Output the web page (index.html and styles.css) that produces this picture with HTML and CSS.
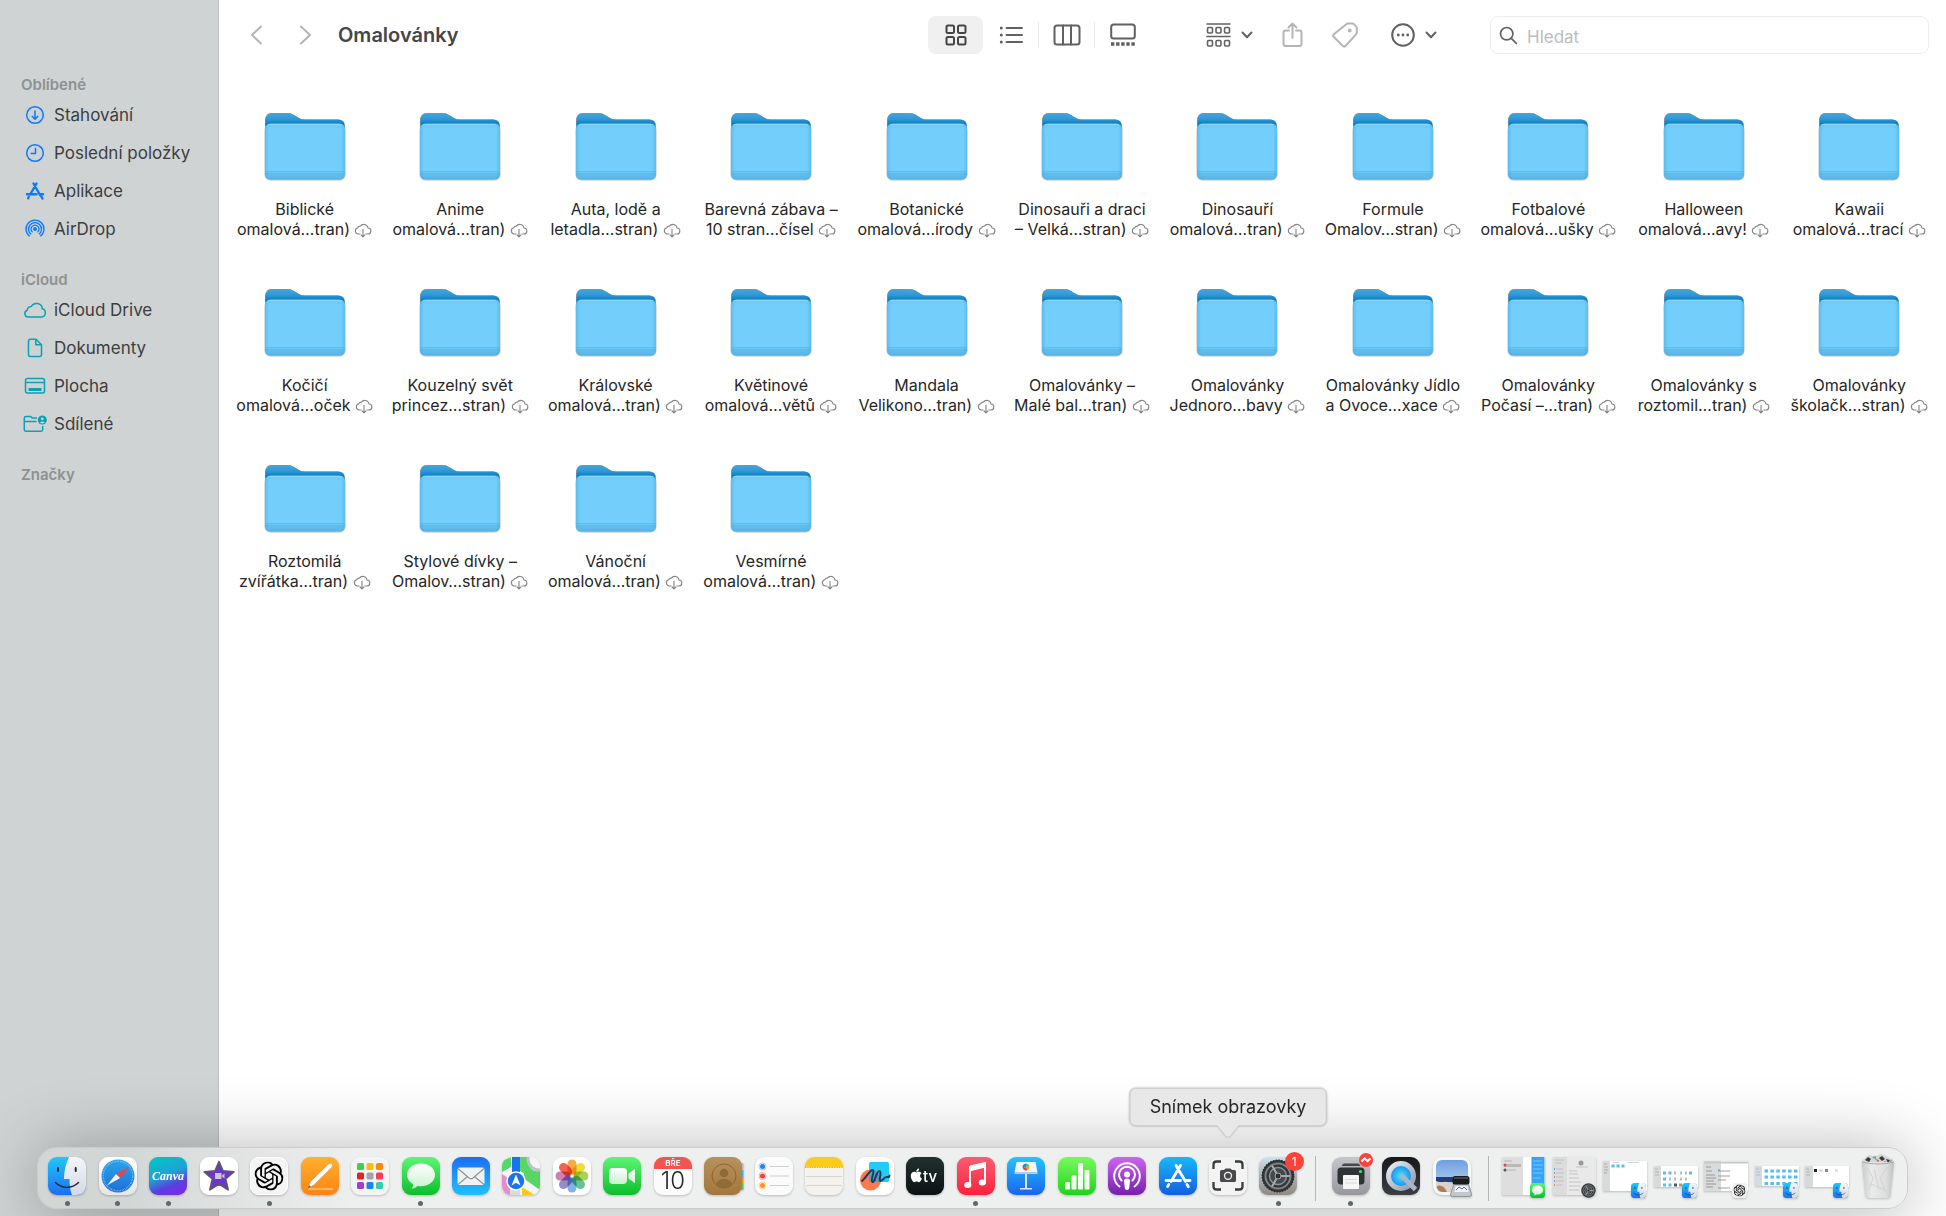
FILE: index.html
```html
<!DOCTYPE html>
<html lang="cs">
<head>
    <meta charset="UTF-8">
    <meta name="viewport" content="width=device-width, initial-scale=1.0">
    <title>Omalovánky</title>
    <link rel="stylesheet" href="styles.css">
</head>
<body>
    <!-- shared shapes and gradients -->
    <svg class="defs" aria-hidden="true">
        <defs>
            <linearGradient id="gBack" x1="0" y1="0" x2="0" y2="1"><stop offset="0" stop-color="#47a5dc"/><stop offset=".15" stop-color="#3399d4"/><stop offset=".28" stop-color="#0a7fc6"/></linearGradient>
            <linearGradient id="gFront" x1="0" y1="0" x2="0" y2="1"><stop offset="0" stop-color="#6bc7f5"/><stop offset=".1" stop-color="#73cefb"/><stop offset=".84" stop-color="#73cefb"/><stop offset=".89" stop-color="#66c3f2"/><stop offset="1" stop-color="#54b3e6"/></linearGradient>
            <linearGradient id="gSide"><stop offset="0" stop-color="#3ba2dc" stop-opacity=".4"/><stop offset=".05" stop-color="#3ba2dc" stop-opacity="0"/><stop offset=".95" stop-color="#3ba2dc" stop-opacity="0"/><stop offset="1" stop-color="#3ba2dc" stop-opacity=".4"/></linearGradient>
            <linearGradient id="gFinder" x1="0" y1="0" x2="0" y2="1"><stop offset="0" stop-color="#1fc8fb"/><stop offset="1" stop-color="#1d6ff2"/></linearGradient>
            <linearGradient id="gFace" x1="0" y1="0" x2="0" y2="1"><stop offset="0" stop-color="#f4f5f8"/><stop offset="1" stop-color="#d3dae8"/></linearGradient>
            <linearGradient id="gWhite" x1="0" y1="0" x2="0" y2="1"><stop offset="0" stop-color="#fff"/><stop offset="1" stop-color="#e6e6e6"/></linearGradient>
            <linearGradient id="gSafari" x1="0" y1="0" x2="0" y2="1"><stop offset="0" stop-color="#2aa5ee"/><stop offset="1" stop-color="#1c6fd8"/></linearGradient>
            <linearGradient id="gCanva" x1=".3" y1="0" x2=".7" y2="1"><stop offset="0" stop-color="#05c1c9"/><stop offset=".45" stop-color="#1ea3d3"/><stop offset=".75" stop-color="#5a3fe0"/><stop offset="1" stop-color="#7a2be8"/></linearGradient>
            <linearGradient id="gOrange" x1="0" y1="0" x2="0" y2="1"><stop offset="0" stop-color="#ffb02e"/><stop offset="1" stop-color="#ff8316"/></linearGradient>
            <linearGradient id="gGreen" x1="0" y1="0" x2="0" y2="1"><stop offset="0" stop-color="#5df675"/><stop offset="1" stop-color="#0cbd2b"/></linearGradient>
            <linearGradient id="gLime" x1="0" y1="0" x2="0" y2="1"><stop offset="0" stop-color="#7af95f"/><stop offset="1" stop-color="#1fd31c"/></linearGradient>
            <linearGradient id="gBubble" x1="0" y1="0" x2="0" y2="1"><stop offset="0" stop-color="#fff"/><stop offset="1" stop-color="#c8f2cf"/></linearGradient>
            <linearGradient id="gMail" x1="0" y1="0" x2="0" y2="1"><stop offset="0" stop-color="#1b6df3"/><stop offset="1" stop-color="#1fc0fd"/></linearGradient>
            <linearGradient id="gTan" x1="0" y1="0" x2="0" y2="1"><stop offset="0" stop-color="#b7925c"/><stop offset="1" stop-color="#a2773c"/></linearGradient>
            <linearGradient id="gTv" x1="0" y1="0" x2="0" y2="1"><stop offset="0" stop-color="#22312f"/><stop offset="1" stop-color="#0b1113"/></linearGradient>
            <linearGradient id="gMusic" x1="0" y1="0" x2="0" y2="1"><stop offset="0" stop-color="#fb5c74"/><stop offset="1" stop-color="#fa233b"/></linearGradient>
            <linearGradient id="gKey" x1="0" y1="0" x2="0" y2="1"><stop offset="0" stop-color="#26c4fd"/><stop offset="1" stop-color="#1a63f0"/></linearGradient>
            <linearGradient id="gPod" x1="0" y1="0" x2="0" y2="1"><stop offset="0" stop-color="#cd65ee"/><stop offset="1" stop-color="#7620ae"/></linearGradient>
            <linearGradient id="gStore" x1="0" y1="0" x2="0" y2="1"><stop offset="0" stop-color="#19b8f8"/><stop offset="1" stop-color="#125fe0"/></linearGradient>
            <linearGradient id="gPrefs" x1="0" y1="0" x2="0" y2="1"><stop offset="0" stop-color="#cbe3ee"/><stop offset=".5" stop-color="#adb2b3"/><stop offset="1" stop-color="#8e8a84"/></linearGradient>
            <linearGradient id="gPrint" x1="0" y1="0" x2="0" y2="1"><stop offset="0" stop-color="#c6c5ca"/><stop offset="1" stop-color="#98979d"/></linearGradient>
            <linearGradient id="gDark" x1="0" y1="0" x2="0" y2="1"><stop offset="0" stop-color="#16181b"/><stop offset="1" stop-color="#3a3d42"/></linearGradient>
            <linearGradient id="gSilver" x1="0" y1="0" x2="1" y2="1"><stop offset="0" stop-color="#e9eef5"/><stop offset="1" stop-color="#8f98a8"/></linearGradient>
            <linearGradient id="gSky" x1="0" y1="0" x2="0" y2="1"><stop offset="0" stop-color="#6f9fdf"/><stop offset="1" stop-color="#c6dbf4"/></linearGradient>
            <linearGradient id="gBin"><stop offset="0" stop-color="#c9cacb"/><stop offset=".3" stop-color="#eceded"/><stop offset=".75" stop-color="#dfdfe0"/><stop offset="1" stop-color="#bdbebf"/></linearGradient>
            <radialGradient id="gQt"><stop offset="0" stop-color="#4be3ff"/><stop offset="1" stop-color="#1580e6"/></radialGradient>
            <clipPath id="tile"><rect width="38" height="38" rx="9"/></clipPath>
        </defs>

        <symbol id="folder" viewBox="0 0 84 70">
            <path d="M2 10Q2 2 9 2H25Q28 2 31 4L36 7Q38 8.500 42 8.500H75Q82 8.500 82 15V40H2z" fill="#8e9aa3"/>
            <path d="M2.500 10Q2.500 2 9 2H25Q28 2 31 4L36 7Q38 8.500 42 8.500H75Q81.500 8.500 81.500 15V40H2.500z" fill="url(#gBack)"/>
            <rect x="1.500" y="13" width="81" height="56.500" rx="6" fill="#6e8ba0" opacity=".55"/>
            <rect x="2" y="12.500" width="80" height="56" rx="5.500" fill="url(#gFront)"/>
            <rect x="2" y="12.500" width="80" height="56" rx="5.500" fill="url(#gSide)"/>
            <path d="M5 13.500h74" stroke="#91dafc" opacity=".8"/>
            <path d="M3 60.500h78M3 63h78" stroke="#4eade0" stroke-width=".7" opacity=".6"/>
        </symbol>
        <symbol id="cloud" viewBox="0 0 18 16">
            <path d="M6.500 11H4.300a3.200 3.200 0 0 1-.5-6.300A2.500 2.500 0 0 1 6.300 3.100 4.300 4.300 0 0 1 14 5a3 3 0 0 1-.3 6h-2.200M9 6v7.500M6.800 11.700 9 13.900l2.200-2.200" fill="none" stroke="#858585" stroke-width="1.100"/>
        </symbol>
        <symbol id="finder" viewBox="0 0 38 38">
            <g clip-path="url(#tile)">
                <rect width="38" height="38" fill="url(#gFinder)"/>
                <path d="M21 0C17.500 7 16 15 16 22h5.500c0 6 .5 11 2.500 16h14V0z" fill="url(#gFace)"/>
                <path d="M10 11v3M27.700 11v3" stroke="#1d2b3a" stroke-width="2" stroke-linecap="round"/>
                <path d="M7.500 25.500c6.500 6.500 16.500 6.500 23 0" fill="none" stroke="#1d2b3a" stroke-width="1.500" stroke-linecap="round"/>
            </g>
        </symbol>
        <symbol id="knot" viewBox="0 0 24 24">
            <path d="M22.2819 9.8211a5.9847 5.9847 0 0 0-.5157-4.9108 6.0462 6.0462 0 0 0-6.5098-2.9A6.0651 6.0651 0 0 0 4.9807 4.1818a5.9847 5.9847 0 0 0-3.9977 2.9 6.0462 6.0462 0 0 0 .7427 7.0966 5.98 5.98 0 0 0 .511 4.9107 6.051 6.051 0 0 0 6.5146 2.9001A5.9847 5.9847 0 0 0 13.2599 24a6.0557 6.0557 0 0 0 5.7718-4.2058 5.9894 5.9894 0 0 0 3.9977-2.9001 6.0557 6.0557 0 0 0-.7475-7.0729zm-9.022 12.6081a4.4755 4.4755 0 0 1-2.8764-1.0408l.1419-.0804 4.7783-2.7582a.7948.7948 0 0 0 .3927-.6813v-6.7369l2.02 1.1686a.071.071 0 0 1 .038.052v5.5826a4.504 4.504 0 0 1-4.4945 4.4944zm-9.6607-4.1254a4.4708 4.4708 0 0 1-.5346-3.0137l.142.0852 4.783 2.7582a.7712.7712 0 0 0 .7806 0l5.8428-3.3685v2.3324a.0804.0804 0 0 1-.0332.0615L9.74 19.9502a4.4992 4.4992 0 0 1-6.1408-1.6464zM2.3408 7.8956a4.485 4.485 0 0 1 2.3655-1.9728V11.6a.7664.7664 0 0 0 .3879.6765l5.8144 3.3543-2.0201 1.1685a.0757.0757 0 0 1-.071 0l-4.8303-2.7865A4.504 4.504 0 0 1 2.3408 7.872zm16.5963 3.8558L13.1038 8.364 15.1192 7.2a.0757.0757 0 0 1 .071 0l4.8303 2.7913a4.4944 4.4944 0 0 1-.6765 8.1042v-5.6772a.79.79 0 0 0-.407-.667zm2.0107-3.0231l-.142-.0852-4.7735-2.7818a.7759.7759 0 0 0-.7854 0L9.409 9.2297V6.8974a.0662.0662 0 0 1 .0284-.0615l4.8303-2.7866a4.4992 4.4992 0 0 1 6.6802 4.66zM8.3065 12.863l-2.02-1.1638a.0804.0804 0 0 1-.038-.0567V6.0742a4.4992 4.4992 0 0 1 7.3757-3.4537l-.142.0805L8.704 5.459a.7948.7948 0 0 0-.3927.6813zm1.0976-2.3654l2.602-1.4998 2.6069 1.4998v2.9994l-2.5974 1.4997-2.6067-1.4997Z"/>
        </symbol>
        <symbol id="messages" viewBox="0 0 38 38">
            <rect width="38" height="38" rx="9" fill="url(#gGreen)"/>
            <path d="M19 6.500c-8 0-14 5-14 11.300 0 4 2.300 7.300 6 9.400.3 1.600-.3 3-1.500 4.300 2.300 0 4.300-.9 6-2.600 1.100.2 2.300.3 3.500.3 8 0 14-5 14-11.400S27 6.500 19 6.500z" fill="url(#gBubble)"/>
        </symbol>
        <symbol id="gear" viewBox="0 0 34 34">
            <circle cx="17" cy="17" r="16" fill="#34373a"/>
            <circle cx="17" cy="17" r="15.500" fill="none" stroke="#2b2d30" stroke-width="2" stroke-dasharray="1.500 1.200"/>
            <circle cx="17" cy="17" r="12.500" fill="none" stroke="#7e8386" stroke-width="2"/>
            <circle cx="17" cy="17" r="8.500" fill="#46494c" stroke="#8b9093" stroke-width="1.500"/>
            <path d="M17 17h12M17 17 11 6.600M17 17 11 27.400" stroke="#a5aaac" stroke-width="2"/>
            <circle cx="17" cy="17" r="3" fill="#2b2d30" stroke="#a5aaac"/>
        </symbol>
        <symbol id="chevron" viewBox="0 0 12 8"><path d="M1.500 1.500 6 6.200l4.500-4.700" fill="none" stroke="#616161" stroke-width="2" stroke-linecap="round" stroke-linejoin="round"/></symbol>
    </svg>

    <div class="window">
        <nav class="sidebar">
            <h2>Oblíbené</h2>
            <ul class="blue">
                <li><a href="#"><svg viewBox="0 0 24 20"><circle cx="12" cy="10" r="8.300"/><path d="M12 5.500v8.500M8.800 11l3.200 3.200 3.200-3.200"/></svg>Stahování</a></li>
                <li><a href="#"><svg viewBox="0 0 24 20"><circle cx="12" cy="10" r="8.300"/><path d="M12.500 4.800V10.500H7.500"/></svg>Poslední položky</a></li>
                <li><a href="#"><svg viewBox="0 0 24 20"><path d="M10.500 2.500l6.800 12M18.500 15.800l.9 1.700M13.500 2.500 7.200 13.500M5.800 16l-.7 1.300M4 13.300h9.500M17.300 13.300h2.700" stroke-width="2.400" stroke-linecap="round"/></svg>Aplikace</a></li>
                <li><a href="#"><svg viewBox="0 0 24 20"><circle cx="12" cy="10" r="1.200" fill="#0a7aff"/><path d="M9.600 13.300a4 4 0 1 1 4.800 0M8.100 15.300a6.500 6.500 0 1 1 7.800 0M6.700 17.300a9 9 0 1 1 10.600 0" stroke-width="1.300"/></svg>AirDrop</a></li>
            </ul>
            <h2>iCloud</h2>
            <ul class="teal">
                <li><a href="#"><svg viewBox="0 0 24 20"><path d="M5.300 17H18.500a4.200 4.200 0 0 0 .9-8.200 6 6 0 0 0-11.200-2.300 3.800 3.800 0 0 0-4 3.700A3.500 3.500 0 0 0 5.300 17z"/></svg>iCloud Drive</a></li>
                <li><a href="#"><svg viewBox="0 0 24 20"><path d="M7.500 1.200H13l5.500 5.500v9.800a2 2 0 0 1-2 2h-9a2 2 0 0 1-2-2V3.200a2 2 0 0 1 2-2zM12.800 1.200v5.600h5.600"/></svg>Dokumenty</a></li>
                <li><a href="#"><svg viewBox="0 0 24 20"><rect x="2.500" y="2.500" width="19" height="14.500" rx="2"/><path d="M2.500 6.500h19"/><path d="M5.500 13.500h13" stroke-width="3"/></svg>Plocha</a></li>
                <li><a href="#"><svg viewBox="0 0 24 20"><path d="M14 4H9.200L7.800 2.500H3A1.700 1.700 0 0 0 1.300 4v11.500A1.700 1.700 0 0 0 3 17.200h15a1.700 1.700 0 0 0 1.700-1.700V12M1.500 7.500h12"/><circle cx="19.300" cy="6" r="4.500" fill="#0ca0b5" stroke="none"/><circle cx="19.300" cy="4.800" r="1.400" fill="#cfd3d4" stroke="none"/><path d="M16.800 8.600q2.500-2.200 5 0-2.500 2-5 0z" fill="#cfd3d4" stroke="none"/></svg>Sdílené</a></li>
            </ul>
            <h2>Značky</h2>
        </nav>

        <main class="content">
            <header class="toolbar">
                <button class="tool" aria-label="Zpět"><svg width="13" height="20" viewBox="0 0 13 20"><path d="M11 1.500 2 10l9 8.500" stroke="#b5b5b5"/></svg></button>
                <button class="tool forward" aria-label="Vpřed"><svg width="13" height="20" viewBox="0 0 13 20"><path d="M2 1.500 11 10l-9 8.500" stroke="#b5b5b5"/></svg></button>
                <h1>Omalovánky</h1>
                <div class="views">
                    <button class="view active" aria-label="Ikony"><svg width="22" height="22" viewBox="0 0 22 22"><rect x="1.500" y="1.500" width="7.500" height="7.500" rx="1.500"/><rect x="13" y="1.500" width="7.500" height="7.500" rx="1.500"/><rect x="1.500" y="13" width="7.500" height="7.500" rx="1.500"/><rect x="13" y="13" width="7.500" height="7.500" rx="1.500"/></svg></button>
                    <button class="view" aria-label="Seznam"><svg width="24" height="20" viewBox="0 0 24 20"><path d="M7.500 3H23M7.500 10H23M7.500 17H23"/><path d="M2.300 3h.01M2.300 10h.01M2.300 17h.01" stroke-width="3"/></svg></button>
                    <span class="line"></span>
                    <button class="view" aria-label="Sloupce"><svg width="28" height="22" viewBox="0 0 28 22"><rect x="1.500" y="1.500" width="25" height="19" rx="2.500"/><path d="M10 1.500v19M18 1.500v19"/></svg></button>
                    <span class="line"></span>
                    <button class="view" aria-label="Galerie"><svg width="26" height="24" viewBox="0 0 26 24"><rect x="1.200" y="1.500" width="23.600" height="14" rx="2.500"/><path d="M1 21h24" stroke-width="3.500" stroke-dasharray="3.400 1.700" stroke-linecap="butt"/></svg></button>
                </div>
                <button class="tool group" aria-label="Seskupit"><svg class="thin" width="25" height="26" viewBox="0 0 25 26"><path d="M1 2h23M1 14.500h23"/><rect x="1.500" y="5.500" width="5" height="5.500" rx="1.200"/><rect x="10" y="5.500" width="5" height="5.500" rx="1.200"/><rect x="18.500" y="5.500" width="5" height="5.500" rx="1.200"/><rect x="1.500" y="18.500" width="5" height="5.500" rx="1.200"/><rect x="10" y="18.500" width="5" height="5.500" rx="1.200"/><rect x="18.500" y="18.500" width="5" height="5.500" rx="1.200"/></svg><svg width="12" height="8"><use href="#chevron"/></svg></button>
                <button class="tool dim" aria-label="Sdílet"><svg width="21" height="26" viewBox="0 0 21 26"><path d="M7 8.500H3.500a2 2 0 0 0-2 2V22a2 2 0 0 0 2 2h14a2 2 0 0 0 2-2V10.500a2 2 0 0 0-2-2H14M10.500 16V1.500M6.500 5.500l4-4 4 4"/></svg></button>
                <button class="tool dim" aria-label="Štítky"><svg width="26" height="26" viewBox="0 0 26 26"><path d="M14 2.500q1-1 2.300-1h4.200q1 0 1.700.8l1.800 2q.8.800.8 1.900v4.200q0 1.200-.8 2L13.500 24q-1.300 1.200-2.600 0L1.800 15q-1.200-1.400 0-2.700z"/><circle cx="17.700" cy="8.500" r="1" fill="#b5b5b5"/></svg></button>
                <button class="tool more" aria-label="Další akce"><svg width="24" height="24" viewBox="0 0 24 24"><circle cx="12" cy="12" r="10.800"/><path d="M7.300 12h.01M12 12h.01M16.700 12h.01" stroke-width="2.800"/></svg><svg width="12" height="8"><use href="#chevron"/></svg></button>
                <label class="search">
                    <svg width="19" height="19" viewBox="0 0 19 19"><circle cx="7.700" cy="7.700" r="6.200"/><path d="m12.300 12.300 5 5"/></svg>
                    <input type="search" placeholder="Hledat" aria-label="Hledat">
                </label>
            </header>

            <div class="files">
                <a class="file" href="#"><svg class="pic"><use href="#folder"/></svg><span>Biblické<br>omalová…tran) <svg class="dl"><use href="#cloud"/></svg></span></a>
                <a class="file" href="#"><svg class="pic"><use href="#folder"/></svg><span>Anime<br>omalová…tran) <svg class="dl"><use href="#cloud"/></svg></span></a>
                <a class="file" href="#"><svg class="pic"><use href="#folder"/></svg><span>Auta, lodě a<br>letadla…stran) <svg class="dl"><use href="#cloud"/></svg></span></a>
                <a class="file" href="#"><svg class="pic"><use href="#folder"/></svg><span>Barevná zábava –<br>10 stran…čísel <svg class="dl"><use href="#cloud"/></svg></span></a>
                <a class="file" href="#"><svg class="pic"><use href="#folder"/></svg><span>Botanické<br>omalová…írody <svg class="dl"><use href="#cloud"/></svg></span></a>
                <a class="file" href="#"><svg class="pic"><use href="#folder"/></svg><span>Dinosauři a draci<br>– Velká…stran) <svg class="dl"><use href="#cloud"/></svg></span></a>
                <a class="file" href="#"><svg class="pic"><use href="#folder"/></svg><span>Dinosauří<br>omalová…tran) <svg class="dl"><use href="#cloud"/></svg></span></a>
                <a class="file" href="#"><svg class="pic"><use href="#folder"/></svg><span>Formule<br>Omalov…stran) <svg class="dl"><use href="#cloud"/></svg></span></a>
                <a class="file" href="#"><svg class="pic"><use href="#folder"/></svg><span>Fotbalové<br>omalová…ušky <svg class="dl"><use href="#cloud"/></svg></span></a>
                <a class="file" href="#"><svg class="pic"><use href="#folder"/></svg><span>Halloween<br>omalová…avy! <svg class="dl"><use href="#cloud"/></svg></span></a>
                <a class="file" href="#"><svg class="pic"><use href="#folder"/></svg><span>Kawaii<br>omalová…trací <svg class="dl"><use href="#cloud"/></svg></span></a>

                <a class="file" href="#"><svg class="pic"><use href="#folder"/></svg><span>Kočičí<br>omalová…oček <svg class="dl"><use href="#cloud"/></svg></span></a>
                <a class="file" href="#"><svg class="pic"><use href="#folder"/></svg><span>Kouzelný svět<br>princez…stran) <svg class="dl"><use href="#cloud"/></svg></span></a>
                <a class="file" href="#"><svg class="pic"><use href="#folder"/></svg><span>Královské<br>omalová…tran) <svg class="dl"><use href="#cloud"/></svg></span></a>
                <a class="file" href="#"><svg class="pic"><use href="#folder"/></svg><span>Květinové<br>omalová…větů <svg class="dl"><use href="#cloud"/></svg></span></a>
                <a class="file" href="#"><svg class="pic"><use href="#folder"/></svg><span>Mandala<br>Velikono…tran) <svg class="dl"><use href="#cloud"/></svg></span></a>
                <a class="file" href="#"><svg class="pic"><use href="#folder"/></svg><span>Omalovánky –<br>Malé bal…tran) <svg class="dl"><use href="#cloud"/></svg></span></a>
                <a class="file" href="#"><svg class="pic"><use href="#folder"/></svg><span>Omalovánky<br>Jednoro…bavy <svg class="dl"><use href="#cloud"/></svg></span></a>
                <a class="file" href="#"><svg class="pic"><use href="#folder"/></svg><span>Omalovánky Jídlo<br>a Ovoce…xace <svg class="dl"><use href="#cloud"/></svg></span></a>
                <a class="file" href="#"><svg class="pic"><use href="#folder"/></svg><span>Omalovánky<br>Počasí –…tran) <svg class="dl"><use href="#cloud"/></svg></span></a>
                <a class="file" href="#"><svg class="pic"><use href="#folder"/></svg><span>Omalovánky s<br>roztomil…tran) <svg class="dl"><use href="#cloud"/></svg></span></a>
                <a class="file" href="#"><svg class="pic"><use href="#folder"/></svg><span>Omalovánky<br>školačk…stran) <svg class="dl"><use href="#cloud"/></svg></span></a>

                <a class="file" href="#"><svg class="pic"><use href="#folder"/></svg><span>Roztomilá<br>zvířátka…tran) <svg class="dl"><use href="#cloud"/></svg></span></a>
                <a class="file" href="#"><svg class="pic"><use href="#folder"/></svg><span>Stylové dívky –<br>Omalov…stran) <svg class="dl"><use href="#cloud"/></svg></span></a>
                <a class="file" href="#"><svg class="pic"><use href="#folder"/></svg><span>Vánoční<br>omalová…tran) <svg class="dl"><use href="#cloud"/></svg></span></a>
                <a class="file" href="#"><svg class="pic"><use href="#folder"/></svg><span>Vesmírné<br>omalová…tran) <svg class="dl"><use href="#cloud"/></svg></span></a>
            </div>
        </main>
    </div>

    <div class="dock">
        <button class="app running" aria-label="Finder"><svg viewBox="0 0 38 38"><use href="#finder"/></svg></button>
        <button class="app running" aria-label="Safari"><svg viewBox="0 0 38 38"><rect width="38" height="38" rx="9" fill="url(#gWhite)"/><circle cx="19" cy="19" r="16.500" fill="url(#gSafari)"/><circle cx="19" cy="19" r="14.800" fill="none" stroke="#a9d5f7" stroke-width="1.500" stroke-dasharray=".5 1.050"/><path d="M31 9 17 17l4 4z" fill="#f0433c"/><path d="M8 28.500 17 17l4 4z" fill="#f5f7f9"/></svg></button>
        <button class="app running" aria-label="Canva"><svg viewBox="0 0 38 38"><rect width="38" height="38" rx="9" fill="url(#gCanva)"/><text class="canva" x="19" y="23" text-anchor="middle">Canva</text></svg></button>
        <button class="app" aria-label="iMovie"><svg viewBox="0 0 38 38"><rect width="38" height="38" rx="9" fill="#fff"/><path d="M19 4.500l4 9.300 10.800 1-8.200 7 2.500 11L19 27l-9.100 5.800 2.500-11-8.200-7 10.800-1z" fill="#6d35cf" stroke="#5d5868" stroke-width="1.700" stroke-linejoin="round"/><path d="M15 16h6.500v6H15zM22 18.500l2.500-2v5l-2.500-2z" fill="#c9c6d6"/></svg></button>
        <button class="app running" aria-label="ChatGPT"><svg viewBox="0 0 38 38"><rect width="38" height="38" rx="9" fill="#f4f4f4"/><rect x=".5" y=".5" width="37" height="37" rx="8.500" fill="none" stroke="#fff"/><use href="#knot" x="4.500" y="4.500" width="29" height="29"/></svg></button>
        <button class="app" aria-label="Pages"><svg viewBox="0 0 38 38"><rect width="38" height="38" rx="9" fill="url(#gOrange)"/><path d="M7 32h25" stroke="#ffd9a6"/><path d="M6.500 31.500l3-7L27 7.500q2.500-2 4-.8t-.5 4L13 28z" fill="#fff" stroke="#d98a35" stroke-width=".6"/><path d="M6.500 31.500l1.700-3.300 1.600 1.500z" fill="#6a5a4a"/></svg></button>
        <button class="app" aria-label="Launchpad"><svg viewBox="0 0 38 38"><rect width="38" height="38" rx="9" fill="#f3f4f5"/><rect x="6" y="6" width="7" height="7" rx="1.500" fill="#3bd348"/><rect x="15.500" y="6" width="7" height="7" rx="1.500" fill="#fdbd0c"/><rect x="25" y="6" width="7" height="7" rx="1.500" fill="#fa8a12"/><rect x="6" y="15.500" width="7" height="7" rx="1.500" fill="#e32222"/><rect x="15.500" y="15.500" width="7" height="7" rx="1.500" fill="#a2a4a8"/><rect x="25" y="15.500" width="7" height="7" rx="1.500" fill="#fb3b5e"/><rect x="6" y="25" width="7" height="7" rx="1.500" fill="#a03fd0"/><rect x="15.500" y="25" width="7" height="7" rx="1.500" fill="#1b84fb"/><rect x="25" y="25" width="7" height="7" rx="1.500" fill="#35cfaa"/></svg></button>
        <button class="app running" aria-label="Zprávy"><svg viewBox="0 0 38 38"><use href="#messages"/></svg></button>
        <button class="app" aria-label="Mail"><svg viewBox="0 0 38 38"><rect width="38" height="38" rx="9" fill="url(#gMail)"/><rect x="5.500" y="10.500" width="27" height="17.500" rx="2" fill="#f0f1f1"/><path d="M6 11.500 17 21q2 1.500 4 0l11-9.500M6 27.500l9.500-8M32 27.500l-9.500-8" fill="none" stroke="#8c9196" stroke-width="1.100"/></svg></button>
        <button class="app" aria-label="Mapy"><svg viewBox="0 0 38 38"><g clip-path="url(#tile)"><rect width="38" height="38" fill="#f5f5f5"/><path d="M0 4 9 0v10L0 15z" fill="#56d766"/><path d="M0 17 9 23v15H0z" fill="#e58cce"/><path d="M18 0h7c0 9 5 15 13 15v10L18 14z" fill="#56d766"/><path d="M38 14v24L22 24v-9z" fill="#58d566"/><path d="M18 19 38 33v5H18z" fill="#f5f5f5"/><path d="M20 30 33 38H20z" fill="#fcca1a"/><circle cx="37" cy="2" r="11" fill="none" stroke="#bcc1c5" stroke-width="3"/><path d="M8 24h10v14H8z" fill="#d9dbe0"/><rect x="10" width="8" height="20" fill="#1873f2"/></g><circle cx="14" cy="24" r="9" fill="#1873f2" stroke="#fff" stroke-width="1.500"/><path d="M14 17.500l4.500 11-4.500-2.800-4.500 2.800z" fill="#fff"/></svg></button>
        <button class="app" aria-label="Fotky"><svg viewBox="0 0 38 38"><rect width="38" height="38" rx="9" fill="#fff"/><g class="petals"><rect x="14.500" y="2.500" width="9" height="15" rx="4.500" fill="#f9a12c"/><rect x="14.500" y="2.500" width="9" height="15" rx="4.500" fill="#e8dc1e" transform="rotate(45 19 19)"/><rect x="14.500" y="2.500" width="9" height="15" rx="4.500" fill="#a2cb46" transform="rotate(90 19 19)"/><rect x="14.500" y="2.500" width="9" height="15" rx="4.500" fill="#58bb88" transform="rotate(135 19 19)"/><rect x="14.500" y="2.500" width="9" height="15" rx="4.500" fill="#70acdf" transform="rotate(180 19 19)"/><rect x="14.500" y="2.500" width="9" height="15" rx="4.500" fill="#8c80c6" transform="rotate(225 19 19)"/><rect x="14.500" y="2.500" width="9" height="15" rx="4.500" fill="#c574ac" transform="rotate(270 19 19)"/><rect x="14.500" y="2.500" width="9" height="15" rx="4.500" fill="#f2513f" transform="rotate(315 19 19)"/></g></svg></button>
        <button class="app" aria-label="FaceTime"><svg viewBox="0 0 38 38"><rect width="38" height="38" rx="9" fill="url(#gGreen)"/><rect x="6" y="11" width="18" height="16" rx="4" fill="url(#gBubble)"/><path d="M25.500 16.500 32 11.700v14.600l-6.500-4.800z" fill="url(#gBubble)"/></svg></button>
        <button class="app" aria-label="Kalendář"><svg viewBox="0 0 38 38"><rect width="38" height="38" rx="9" fill="#fbfbfb"/><path d="M0 12V9a9 9 0 0 1 9-9h20a9 9 0 0 1 9 9v3z" fill="#f45450"/><text class="month" x="19" y="9" text-anchor="middle">BŘE</text><text class="day" x="19" y="32" text-anchor="middle">10</text></svg></button>
        <button class="app" aria-label="Kontakty"><svg viewBox="0 0 38 38"><path d="M36 6h2.500q1 0 1 1v5.500H36z" fill="#b9babc"/><path d="M36 13h3.500v7H36z" fill="#43b0ea"/><path d="M36 20h3.500v7H36z" fill="#f88f1c"/><path d="M36 27h3.500v5q0 1-1 1H36z" fill="#52c964"/><rect width="38" height="38" rx="9" fill="url(#gTan)"/><g fill="none" stroke="#866331" stroke-width=".9"><circle cx="20" cy="19" r="12"/></g><circle cx="20" cy="16" r="4.300" fill="#8f6b38"/><path d="M11.500 27q3-5 8.500-5t8.500 5q-8 8-17 0z" fill="#8f6b38"/></svg></button>
        <button class="app" aria-label="Připomínky"><svg viewBox="0 0 38 38"><rect width="38" height="38" rx="9" fill="#fbfbfb"/><path d="M14.500 9.500H34M14.500 19H34M14.500 28.500H34" stroke="#cfcfcf"/><g stroke-width="1"><circle cx="7.500" cy="9.500" r="2.500" fill="#2183f5"/><circle cx="7.500" cy="9.500" r="3.500" fill="none" stroke="#9dc9fa"/><circle cx="7.500" cy="19" r="2.500" fill="#ee4137"/><circle cx="7.500" cy="19" r="3.500" fill="none" stroke="#f7aba6"/><circle cx="7.500" cy="28.500" r="2.500" fill="#f7931d"/><circle cx="7.500" cy="28.500" r="3.500" fill="none" stroke="#fbcf97"/></g></svg></button>
        <button class="app" aria-label="Poznámky"><svg viewBox="0 0 38 38"><rect width="38" height="38" rx="9" fill="#f3f2ef"/><path d="M0 10V9a9 9 0 0 1 9-9h20a9 9 0 0 1 9 9v1z" fill="#fdcb1b"/><path d="M0 10.500h38" stroke="#b9a985" stroke-dasharray="1 .7"/><path d="M1 19.500h36M1 28.500h36" stroke="#d8d6d1"/></svg></button>
        <button class="app" aria-label="Freeform"><svg viewBox="0 0 38 38"><rect width="38" height="38" rx="9" fill="#fff"/><rect x="13" y="5" width="20" height="20" rx="1.500" fill="#1fcdf8"/><circle cx="14.500" cy="23" r="10.500" fill="#fb7a4f"/><path d="M13 12.700A10.500 10.500 0 0 1 24.800 25H14.500q-1.500 0-1.500-1.500z" fill="#5a9cb8"/><path d="M6 24c5-4 8-12 11-11 2 1-3 11-.5 12s4-12 7-11-1.500 10 1 10 3-3.500 6-4 2 1.500 3-1.500" fill="none" stroke="#123c66" stroke-width="2" stroke-linecap="round"/></svg></button>
        <button class="app" aria-label="Apple TV"><svg viewBox="0 0 38 38"><rect width="38" height="38" rx="9" fill="url(#gTv)"/><path transform="translate(3.500 11.500) scale(.57)" d="M12.152 6.896c-.948 0-2.415-1.078-3.960-1.040-2.040.027-3.910 1.183-4.961 3.014-2.117 3.675-.546 9.103 1.519 12.090 1.013 1.454 2.208 3.090 3.792 3.039 1.520-.065 2.090-.987 3.935-.987 1.831 0 2.350.987 3.960.948 1.637-.026 2.676-1.480 3.676-2.948 1.156-1.688 1.636-3.325 1.662-3.415-.039-.013-3.182-1.221-3.220-4.857-.026-3.040 2.480-4.494 2.597-4.559-1.429-2.090-3.623-2.324-4.390-2.376-2-.156-3.675 1.090-4.610 1.090zM15.530 3.830c.843-1.012 1.400-2.427 1.245-3.830-1.207.052-2.662.805-3.532 1.818-.780.896-1.454 2.338-1.273 3.714 1.338.104 2.715-.688 3.559-1.701" fill="#fff"/><text class="tv" x="17" y="25">tv</text></svg></button>
        <button class="app running" aria-label="Hudba"><svg viewBox="0 0 38 38"><rect width="38" height="38" rx="9" fill="url(#gMusic)"/><path d="M13 9.500 28 6v20.500" fill="none" stroke="#fff" stroke-width="2"/><path d="M12 9.500 28.500 6v4.500L14 14v13h-2z" fill="#fff"/><ellipse cx="10.800" cy="28" rx="3.600" ry="3" fill="#fff"/><ellipse cx="25.300" cy="25.500" rx="3.600" ry="3" fill="#fff"/></svg></button>
        <button class="app" aria-label="Keynote"><svg viewBox="0 0 38 38"><rect width="38" height="38" rx="9" fill="url(#gKey)"/><path d="M9.500 5h19l2 10.500h-23z" fill="#f4f5f7"/><path d="M7.500 15.500h23v1.500h-23z" fill="#c4cdd8"/><path d="M18 17h2v14h-2zM13 31h12v1.500H13z" fill="#dfe5ec"/><path d="M19 10V6.500a3.500 3.500 0 0 1 3.300 2.500z" fill="#46c352"/><path d="M19 10l3.300-1a3.500 3.500 0 0 1-2 4.200z" fill="#f4a51f"/><path d="M19 10l1.300 3.200a3.500 3.500 0 0 1-4.500-1.700z" fill="#e9433e"/><path d="M19 10l-3.200 1.500A3.500 3.500 0 0 1 19 6.500z" fill="#2e86e8"/></svg></button>
        <button class="app" aria-label="Numbers"><svg viewBox="0 0 38 38"><rect width="38" height="38" rx="9" fill="url(#gLime)"/><g fill="#f4fdf2"><rect x="7" y="25" width="5" height="7.500" rx="1"/><rect x="13.500" y="18.500" width="5" height="14" rx="1"/><rect x="20" y="6" width="5" height="26.500" rx="1"/><rect x="26.500" y="13" width="5" height="19.500" rx="1"/></g></svg></button>
        <button class="app" aria-label="Podcasty"><svg viewBox="0 0 38 38"><rect width="38" height="38" rx="9" fill="url(#gPod)"/><g fill="none" stroke="#fff" stroke-width="2" stroke-linecap="round"><path d="M11.500 29.500a12.800 12.800 0 1 1 15 0"/><path d="M13.500 23.500a8 8 0 1 1 11 0"/></g><circle cx="19" cy="17.500" r="3" fill="#fff"/><path d="M16 24q0-2.500 3-2.500t3 2.500l-.8 7q-.3 2-2.200 2t-2.200-2z" fill="#fff"/></svg></button>
        <button class="app" aria-label="App Store"><svg viewBox="0 0 38 38"><rect width="38" height="38" rx="9" fill="url(#gStore)"/><path d="M17 8.500l9.500 16M28 27.500l1.300 2.200M21.500 8.500 12 24.500M9.800 27.500l-1.200 2M7 23.500h14.500M26 23.500h5" stroke="#fff" stroke-width="2.800" stroke-linecap="round" fill="none"/></svg></button>
        <button class="app" aria-label="Snímek obrazovky"><svg viewBox="0 0 38 38"><rect width="38" height="38" rx="9" fill="#f3f3f4"/><path d="M4.500 12V7.500q0-3 3-3H12M26 4.500h4.500q3 0 3 3V12M33.500 25v4.500q0 3-3 3H26M12 32.500H7.500q-3 0-3-3V25" fill="none" stroke="#3b3b3d" stroke-width="2.300"/><path d="M11 14.500q0-1.500 1.500-1.500h2.500l1.500-1.500h5L23 13h2.500q1.500 0 1.500 1.500v9q0 1.500-1.500 1.500h-13Q11 25 11 23.500z" fill="#48494b"/><circle cx="19" cy="18.800" r="3.500" fill="none" stroke="#f3f3f4" stroke-width="1.300"/></svg><span class="tip">Snímek obrazovky</span></button>
        <button class="app running" aria-label="Nastavení systému"><svg viewBox="0 0 38 38"><rect width="38" height="38" rx="9" fill="url(#gPrefs)"/><use href="#gear" x="2" y="2" width="34" height="34"/></svg><span class="badge">1</span></button>
        <span class="split"></span>
        <button class="app running" aria-label="Tiskárna"><svg viewBox="0 0 38 38"><rect width="38" height="38" rx="9" fill="url(#gPrint)"/><path d="M10 9q0-2.500 2.500-2.500h13Q28 6.500 28 9z" fill="#45484a"/><rect x="5.500" y="10.500" width="27" height="17" rx="3.500" fill="#303334"/><circle cx="28.500" cy="14.500" r="1.600" fill="#3fe25a"/><rect x="11" y="18" width="16" height="14" rx="1" fill="#f6f6f6"/><path d="M13 22.500h12M13 26h12" stroke="#d7d7d7"/></svg><span class="badge small"><svg viewBox="0 0 14 14"><path d="M2.500 8.500 5.500 5.500 8.500 8 11.500 5.500" fill="none" stroke="#fff" stroke-width="2.200"/></svg></span></button>
        <button class="app" aria-label="QuickTime Player"><svg viewBox="0 0 38 38"><rect width="38" height="38" rx="9" fill="url(#gDark)"/><circle cx="19" cy="19" r="12.500" fill="url(#gQt)" stroke="url(#gSilver)" stroke-width="5"/><path d="M19 18l14.500 14.500" stroke="#aab4c4" stroke-width="5"/></svg></button>
        <button class="app" aria-label="Náhled"><svg viewBox="0 0 38 38"><rect width="38" height="38" rx="9" fill="#f6f7f8"/><rect x="3" y="3" width="32" height="32" rx="6" fill="url(#gSky)"/><path d="M3 20h32v5H3z" fill="#243f74"/><path d="M3 24q5 2 8 1t9 3v7H9q-6 0-6-6z" fill="#d9d3c8"/><path d="M4 29q6-2 10 6H9q-5-1-5-6z" fill="#aa7d5c"/><path d="M21 27l-3.500 10q-.5 2.500 2 2.500h17q2.500 0 2-2.500L35.500 27z" fill="#c3c7cb" stroke="#7b7f83" stroke-width=".7"/><path d="M22.500 29h12l1 6h-14z" fill="#eef2f6"/><path d="M23 33l3-3 3 2 2-2 3 3" fill="none" stroke="#5376a8"/><rect x="19.500" y="19" width="17" height="8.500" rx="2.500" fill="#1b1c1e"/><path d="M21 21h14" stroke="#6d6f72"/></svg></button>
        <span class="split"></span>
        <button class="app mini" aria-label="Zprávy"><svg viewBox="0 0 46 38"><rect x="1" width="43" height="38" fill="#fff"/><path d="M1 0h21v38H1z" fill="#dedede"/><path d="M3 7h17v3H3z" fill="#b9b9b9"/><circle cx="4" cy="8" r="1.500" fill="#e5493e"/><circle cx="4" cy="13" r="1.500" fill="#555"/><path d="M6 13h9M3 4h8" stroke="#aaa" stroke-width=".8"/><path d="M30.500 0h13v38h-13z" fill="#36a3f8"/><path d="M32 4h9M32 8h10M32 12h9M32 16h10M32 21h8" stroke="#9fd3fc" stroke-width=".7"/><use href="#messages" x="29" y="26" width="15" height="15"/></svg></button>
        <button class="app mini" aria-label="Nastavení systému"><svg viewBox="0 0 46 38"><rect x="1" width="43" height="38" fill="#e9e9e9"/><path d="M1 0h14v38H1z" fill="#dcdcdc"/><path d="M3 3h9M3 6h7M4 12h7M4 16h8M4 20h7M4 24h8M4 28h6M17 14h8M17 17h9M17 21h10M17 25h12M17 29h11M17 33h10M24 10h12" stroke="#b9b9b9" stroke-width=".8"/><path d="M2 12h1M2 16h1M2 24h1" stroke="#3d8ff5" stroke-width="1.500"/><path d="M2 20h1M2 28h1" stroke="#f16a50" stroke-width="1.500"/><circle cx="29" cy="6" r="2.500" fill="#999"/><use href="#gear" x="29" y="26" width="15" height="15"/></svg></button>
        <button class="app mini" aria-label="Finder"><svg viewBox="0 0 46 38"><rect x="1" y="4" width="44" height="30" fill="#fff"/><path d="M1 4h7v30H1z" fill="#d7dadb"/><path d="M2 7h3M2 10h4M2 13h4M2 16h3" stroke="#999" stroke-width=".7"/><path d="M11 5.500h6M25 5.500h12" stroke="#bbb" stroke-width=".7"/><path d="M9.500 9h3M14.500 9h3M19.500 9h3" stroke="#55bdf3" stroke-width="3"/><use href="#finder" x="29" y="26" width="15" height="15"/></svg></button>
        <button class="app mini" aria-label="Finder"><svg viewBox="0 0 46 38"><rect x="1" y="9" width="44" height="21" fill="#fff"/><path d="M1 9h7v21H1z" fill="#d7dadb"/><path d="M2 12h3M2 15h4M2 18h4" stroke="#aaa" stroke-width=".7"/><path d="M10 16h3M15.500 16h3M36 16h3M10 22h3M10 28h3M15.500 28h3" stroke="#55bdf3" stroke-width="3"/><path d="M21 16h2M27 16h2M32 16h2M16 22h2M21 22h2M27 22h2M32 22h2" stroke="#bdbdbd" stroke-width="3"/><path d="M21 28h3" stroke="#555" stroke-width="3"/><path d="M26 28h3" stroke="#c98b6b" stroke-width="3"/><use href="#finder" x="29" y="26" width="15" height="15"/></svg></button>
        <button class="app mini" aria-label="ChatGPT"><svg viewBox="0 0 46 38"><rect x="1" y="4" width="44" height="30" fill="#fff"/><path d="M1 4h17v30H1z" fill="#d9dadb"/><path d="M1 5.500h44" stroke="#c9c9c9" stroke-width="2"/><path d="M3 10h5M3 14h6M3 18h9M3 21h10M3 24h8M3 27h10M3 30h7M15 14h12M15 19h12M15 23h8M15 31h12" stroke="#888" stroke-width=".8"/><path d="M15 13h2" stroke="#3c8ef3"/><rect x="29" y="26" width="15" height="15" rx="3.500" fill="#efefef"/><use href="#knot" x="30.500" y="27.500" width="12" height="12"/></svg></button>
        <button class="app mini" aria-label="Finder"><svg viewBox="0 0 46 38"><rect x="1" y="9" width="44" height="20" fill="#fff"/><path d="M1 9h7v20H1z" fill="#d7dadb"/><path d="M2 12h3M2 15h4M2 18h4" stroke="#8cb9e8" stroke-width=".7"/><path d="M10.500 14h33M10.500 20h33M10.500 26.500h33" stroke="#55bdf3" stroke-width="3" stroke-dasharray="3.500 2.400"/><use href="#finder" x="29" y="26" width="15" height="15"/></svg></button>
        <button class="app mini" aria-label="Finder"><svg viewBox="0 0 46 38"><rect x="1" y="9" width="44" height="21" fill="#fff"/><path d="M1 9h8v21H1z" fill="#d7dadb"/><path d="M2 12h3M2 15h4M2 18h4" stroke="#aaa" stroke-width=".7"/><path d="M10 13.500h3" stroke="#222" stroke-width="3"/><path d="M15 13.500h4M31 13.500h3" stroke="#d5d5d5" stroke-width="2"/><path d="M21 13.500h3" stroke="#888" stroke-width="3"/><use href="#finder" x="29" y="26" width="15" height="15"/></svg></button>
        <button class="app bin" aria-label="Koš"><svg viewBox="0 0 38 46"><path d="M4 6l6-5 6 2 6-3 6 3 6 3-2 5H6z" fill="#d5d5d5"/><path d="M6 6l3-3 3 2-2 3zM20 4l3-2 3 3-3 2zM27 5l4 1-2 3z" fill="#39383a"/><path d="M13 3l4-1v4zM30 8l3-3-1 5z" fill="#52b5a7"/><path d="M17 5l3 1-1 3zM25 7l3 1-2 2z" fill="#d3623e"/><path d="M3 8h32l-3.500 33q-.4 3-3.500 3H10q-3.100 0-3.500-3z" fill="url(#gBin)" opacity=".93"/><path d="M3 8q16 4 32 0" fill="none" stroke="#a9aaab"/><path d="M8 14l6 10-4 12M28 13l-7 11 6 14M15 15l5 20M12 30l14 6" fill="none" stroke="#d6d5d3" stroke-width="1.200"/></svg></button>
    </div>
</body>
</html>
```
FILE: styles.css
```css
* {
    box-sizing: border-box;
}

body {
    margin: 0;
    font-family: Inter, "Liberation Sans", sans-serif;
    color: #262626;
    background: #fff;
    overflow: hidden;
}

button {
    padding: 0;
    border: none;
    background: none;
    font: inherit;
}

svg {
    display: block;
}

.defs {
    position: absolute;
    width: 0;
    height: 0;
}

.window {
    display: flex;
    min-height: 100vh;
}

/* Sidebar */
.sidebar {
    width: 219px;
    flex: none;
    padding: 76px 8px 0 21px;
    background: #cfd3d4;
    border-right: 1px solid #bcc0c1;
}

.sidebar h2 {
    margin: 0 0 2px;
    font-size: 15px;
    line-height: 18px;
    font-weight: 600;
    color: #8d9192;
}

.sidebar ul {
    margin: 0 0 23px;
    padding: 0;
    list-style: none;
}

.sidebar a {
    display: flex;
    align-items: center;
    gap: 7px;
    height: 38px;
    padding-left: 2px;
    font-size: 17px;
    color: #3c3e3f;
    text-decoration: none;
}

.sidebar svg {
    width: 24px;
    height: 20px;
    fill: none;
    stroke-width: 1.5;
    stroke-linejoin: round;
}

.blue svg {
    stroke: #0a7aff;
}

.teal svg {
    stroke: #0ca0b5;
}

/* Toolbar */
.content {
    flex: 1;
    min-width: 0;
}

.toolbar {
    display: flex;
    align-items: center;
    height: 70px;
    padding: 0 17px 0 31px;
}

.toolbar svg {
    fill: none;
    stroke: #616161;
    stroke-width: 2;
    stroke-linecap: round;
    stroke-linejoin: round;
}

.toolbar svg.thin {
    stroke-width: 1.6;
}

.toolbar h1 {
    flex: 1;
    margin: 0 0 0 26px;
    font-size: 20px;
    font-weight: 600;
    color: #464646;
}

.tool {
    display: flex;
    align-items: center;
    justify-content: space-between;
    margin-left: 29px;
}

.tool:first-child {
    margin-left: 0;
}

.tool.forward {
    margin-left: 36px;
}

.tool.group {
    width: 47px;
    margin-left: 56px;
}

.tool.more {
    width: 46px;
    margin-left: 33px;
}

.toolbar .dim svg {
    stroke: #b5b5b5;
}

.views {
    display: flex;
    align-items: center;
}

.view {
    display: flex;
    align-items: center;
    justify-content: center;
    width: 55px;
    height: 38px;
    border-radius: 8px;
}

.view.active {
    background: #f0f0f0;
}

.toolbar .active svg {
    stroke: #454545;
}

.line {
    width: 1px;
    height: 26px;
    background: #e9e9e9;
}

.search {
    display: flex;
    align-items: center;
    gap: 9px;
    width: 439px;
    height: 38px;
    margin-left: 53px;
    padding: 0 8px;
    border: 1px solid #ededed;
    border-radius: 8px;
}

.search svg {
    stroke-width: 1.7;
}

.search input {
    flex: 1;
    min-width: 0;
    padding: 3px 0 0;
    border: none;
    outline: none;
    background: none;
    font: inherit;
    font-size: 17px;
}

.search input::placeholder {
    color: #bcbcbc;
}

/* Folder grid */
.files {
    display: grid;
    grid-template-columns: repeat(11, 1fr);
    row-gap: 48px;
    padding: 41px 9px 0 8px;
}

.file {
    display: flex;
    flex-direction: column;
    align-items: center;
    gap: 18px;
    font-size: 16px;
    line-height: 20px;
    text-align: center;
    white-space: nowrap;
    color: #262626;
    text-decoration: none;
}

.pic {
    width: 84px;
    height: 70px;
}

.dl {
    display: inline-block;
    width: 18px;
    height: 16px;
    vertical-align: -4px;
}

/* Dock */
.dock {
    position: fixed;
    left: 37px;
    right: 38px;
    bottom: 7px;
    display: flex;
    height: 62px;
    padding: 0 4px;
    border: 1px solid #c9cccb;
    border-radius: 20px;
    background: linear-gradient(90deg, #d2d7d6 90px, #e0e2e2 190px, #eef0ef 320px);
    box-shadow: 0 4px 70px rgba(0, 0, 0, .32);
}

.app {
    position: relative;
    flex: 1;
    min-width: 0;
    display: flex;
    flex-direction: column;
    align-items: center;
    padding-top: 9px;
    justify-content: flex-start;
}

.app > svg {
    width: 38px;
    height: 38px;
    flex: none;
    overflow: visible;
    filter: drop-shadow(0 1px 1px rgba(0, 0, 0, .22));
}

.running::after {
    content: "";
    width: 5px;
    height: 5px;
    margin-top: 6px;
    border-radius: 50%;
    background: #646767;
}

.mini > svg {
    width: 46px;
}

.bin {
    padding-top: 6px;
}

.bin > svg {
    height: 46px;
}

.split {
    width: 22px;
    flex: none;
    padding: 8px 0 7px 11px;
}

.split::before {
    content: "";
    display: block;
    width: 1px;
    height: 100%;
    background: #b4b6b6;
}

.badge {
    position: absolute;
    top: 4px;
    right: 0;
    width: 19px;
    height: 19px;
    border-radius: 50%;
    background: #fc4239;
    color: #fff;
    font-size: 12px;
    line-height: 19px;
    text-align: center;
}

.badge.small {
    top: 5px;
    right: 3px;
    width: 14px;
    height: 14px;
}

.tip {
    position: absolute;
    left: 50%;
    bottom: 82px;
    transform: translateX(-50%);
    padding: 0 19px;
    border: 1px solid #d0d0d0;
    border-radius: 6px;
    background: #e8e8e8;
    filter: drop-shadow(0 0 1px rgba(0, 0, 0, .35));
    font-size: 18px;
    line-height: 36px;
    white-space: nowrap;
    color: #262626;
}

.tip::after {
    content: "";
    position: absolute;
    left: 50%;
    top: 36px;
    width: 22px;
    height: 12px;
    margin-left: -11px;
    background: #e8e8e8;
    clip-path: polygon(0 0, 100% 0, 60% 90%, 50% 100%, 40% 90%);
}

.petals rect {
    mix-blend-mode: multiply;
    opacity: .9;
}

.canva {
    font: italic bold 12px "Liberation Serif", serif;
    fill: #fff;
}

.month {
    font-size: 8px;
    font-weight: 600;
    fill: #fff;
}

.day {
    font-size: 24px;
    font-weight: 300;
    fill: #262626;
}

.tv {
    font-size: 15px;
    font-weight: 500;
    fill: #fff;
}
```
